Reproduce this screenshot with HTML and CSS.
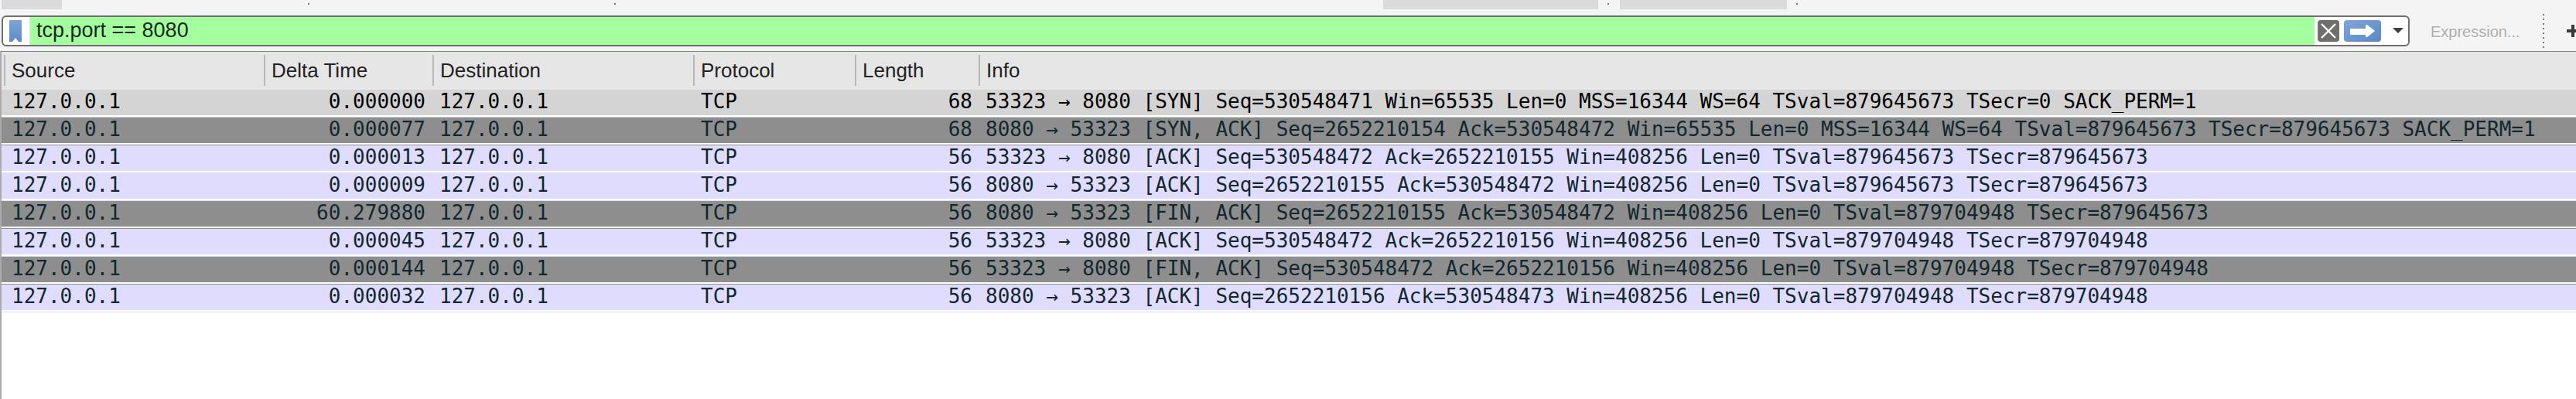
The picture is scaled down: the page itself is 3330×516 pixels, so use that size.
FILE: index.html
```html
<!DOCTYPE html>
<html lang="en">
<head>
<meta charset="utf-8">
<title>Wireshark filter tcp.port == 8080</title>
<link rel="stylesheet" href="styles.css">
</head>
<body>
<div class="toolbar">
  <div class="strip">
    <span class="block"></span><span></span><span class="dot"></span><span></span><span class="dot"></span><span></span><span class="block"></span><span></span><span class="dot"></span><span></span><span class="block"></span><span></span><span class="dot"></span>
  </div>
  <div class="filter-row">
    <div class="filter">
      <div class="bookmark">
        <svg width="16" height="28" viewBox="0 0 16 28"><defs><linearGradient id="bm" x1="0" y1="0" x2="0" y2="1"><stop offset="0" stop-color="#7ea5da"/><stop offset="1" stop-color="#5d8bc8"/></linearGradient></defs><path d="M1 0H15a1 1 0 0 1 1 1V28H12L8 23L4 28H0V1a1 1 0 0 1 1-1Z" fill="url(#bm)"/></svg>
      </div>
      <div class="filter-text">tcp.port == 8080</div>
      <div class="filter-actions">
        <svg class="btn-clear" width="28" height="28" viewBox="0 0 28 28"><rect width="28" height="28" rx="4" fill="#6f6f6b"/><path d="M5 5L23 23M23 5L5 23" stroke="#fff" stroke-width="2.4" fill="none"/></svg>
        <svg class="btn-apply" width="48" height="28" viewBox="0 0 48 28"><defs><linearGradient id="ap" x1="0" y1="0" x2="1" y2="1"><stop offset="0" stop-color="#7fa6da"/><stop offset="1" stop-color="#5a88c6"/></linearGradient></defs><rect width="48" height="28" rx="4" fill="url(#ap)"/><path d="M9 11H28V6H30L40 14L30 22H28V19H9a1 1 0 0 1-1-1V12a1 1 0 0 1 1-1Z" fill="#fff"/></svg>
        <svg class="btn-drop" width="14" height="7" viewBox="0 0 14 7"><path d="M0 0H14L7 7Z" fill="#3f3f3f"/></svg>
      </div>
    </div>
    <div class="expression">Expression...</div>
    <div class="dotted"></div>
    <svg class="plus" width="12" height="16" viewBox="0 0 12 16"><path d="M6 0H10V6H12V10H10V16H6V10H0V6H6Z" fill="#3a3a3a"/></svg>
  </div>
</div>
<div class="table">
  <div class="head">
    <div class="hcell">Source</div>
    <div class="hcell">Delta Time</div>
    <div class="hcell">Destination</div>
    <div class="hcell">Protocol</div>
    <div class="hcell">Length</div>
    <div class="hcell">Info</div>
  </div>
  <div class="row syn"><div class="cells"><span class="c-src">127.0.0.1</span><span class="c-r">0.000000</span><span>127.0.0.1</span><span>TCP</span><span class="c-r">68</span><span class="c-info">53323 → 8080 [SYN] Seq=530548471 Win=65535 Len=0 MSS=16344 WS=64 TSval=879645673 TSecr=0 SACK_PERM=1</span></div></div>
  <div class="row dark"><div class="cells"><span class="c-src">127.0.0.1</span><span class="c-r">0.000077</span><span>127.0.0.1</span><span>TCP</span><span class="c-r">68</span><span class="c-info">8080 → 53323 [SYN, ACK] Seq=2652210154 Ack=530548472 Win=65535 Len=0 MSS=16344 WS=64 TSval=879645673 TSecr=879645673 SACK_PERM=1</span></div></div>
  <div class="row tcp"><div class="cells"><span class="c-src">127.0.0.1</span><span class="c-r">0.000013</span><span>127.0.0.1</span><span>TCP</span><span class="c-r">56</span><span class="c-info">53323 → 8080 [ACK] Seq=530548472 Ack=2652210155 Win=408256 Len=0 TSval=879645673 TSecr=879645673</span></div></div>
  <div class="row tcp"><div class="cells"><span class="c-src">127.0.0.1</span><span class="c-r">0.000009</span><span>127.0.0.1</span><span>TCP</span><span class="c-r">56</span><span class="c-info">8080 → 53323 [ACK] Seq=2652210155 Ack=530548472 Win=408256 Len=0 TSval=879645673 TSecr=879645673</span></div></div>
  <div class="row dark"><div class="cells"><span class="c-src">127.0.0.1</span><span class="c-r">60.279880</span><span>127.0.0.1</span><span>TCP</span><span class="c-r">56</span><span class="c-info">8080 → 53323 [FIN, ACK] Seq=2652210155 Ack=530548472 Win=408256 Len=0 TSval=879704948 TSecr=879645673</span></div></div>
  <div class="row tcp"><div class="cells"><span class="c-src">127.0.0.1</span><span class="c-r">0.000045</span><span>127.0.0.1</span><span>TCP</span><span class="c-r">56</span><span class="c-info">53323 → 8080 [ACK] Seq=530548472 Ack=2652210156 Win=408256 Len=0 TSval=879704948 TSecr=879704948</span></div></div>
  <div class="row dark"><div class="cells"><span class="c-src">127.0.0.1</span><span class="c-r">0.000144</span><span>127.0.0.1</span><span>TCP</span><span class="c-r">56</span><span class="c-info">53323 → 8080 [FIN, ACK] Seq=530548472 Ack=2652210156 Win=408256 Len=0 TSval=879704948 TSecr=879704948</span></div></div>
  <div class="row tcp"><div class="cells"><span class="c-src">127.0.0.1</span><span class="c-r">0.000032</span><span>127.0.0.1</span><span>TCP</span><span class="c-r">56</span><span class="c-info">8080 → 53323 [ACK] Seq=2652210156 Ack=530548473 Win=408256 Len=0 TSval=879704948 TSecr=879704948</span></div></div>
</div>
</body>
</html>
```
FILE: styles.css
```css
* { box-sizing: border-box; }
html, body { margin: 0; padding: 0; }
body {
  width: 3330px;
  height: 516px;
  overflow: hidden;
  background: #fff;
  font-family: "Liberation Sans", Arial, sans-serif;
}
.toolbar {
  height: 66px;
  background: #f4f4f4;
}
.strip {
  display: grid;
  height: 12px;
  padding-left: 2px;
  grid-template-columns: 78px 318px 2px 394px 2px 992px 278px 12px 2px 14px 216px 12px 2px;
}
.block { background: #dadada; height: 12px; }
.dot { background: #777; width: 2px; height: 2px; margin-top: 4px; }
.filter-row {
  display: flex;
  align-items: flex-start;
  margin-top: 8px;
  padding-left: 2px;
  height: 46px;
}
.filter {
  display: flex;
  width: 3113px;
  height: 40px;
  border: 2px solid #6e6e6e;
  border-radius: 6px;
  background: #fff;
  overflow: hidden;
}
.bookmark {
  width: 35px;
  flex: none;
  padding: 4px 0 0 8px;
  border-right: 1px solid #e2e2e2;
}
.bookmark svg, .filter-actions svg { display: block; }
.filter-text {
  flex: 1;
  background: #a5ff9f;
  padding-left: 8px;
  font-size: 27px;
  line-height: 35px;
  color: #14281c;
}
.filter-actions {
  display: flex;
  flex: none;
  width: 121px;
  padding: 4px 0 0 4px;
  align-items: flex-start;
}
.btn-apply { margin-left: 6px; }
.btn-drop { margin: 10px 0 0 15px; }
.expression {
  margin: 9px 0 0 27px;
  width: 145px;
  flex: none;
  font-size: 20px;
  line-height: 24px;
  color: #adadad;
  text-shadow: 0 1px 0 #fff;
}
.dotted {
  width: 2px;
  height: 44px;
  margin-top: -2px;
  flex: none;
  background: repeating-linear-gradient(to bottom, #777 0 2px, transparent 2px 6px);
}
.plus { margin: 12px 0 0 29px; flex: none; }
.table {
  height: 450px;
  border-top: 1px solid #808080;
  border-left: 2px solid #ababab;
}
.head {
  display: grid;
  grid-template-columns: 336px 218px 337px 209px 160px 1fr;
  height: 49px;
  background: #e6e6e6;
  padding: 4px 0 5px 3px;
}
.hcell {
  border-left: 2px solid #b8b8b8;
  padding-left: 8px;
  font-size: 26px;
  line-height: 40px;
  color: #222;
}
.row { height: 36px; padding-bottom: 1px; }
.cells {
  display: grid;
  grid-template-columns: 340px 216px 338px 210px 159px 1fr;
  height: 35px;
  border-bottom: 2px solid #fff;
  font-family: "DejaVu Sans Mono", "Liberation Mono", monospace;
  font-size: 26px;
  line-height: 31px;
  white-space: pre;
}
.cells > span { padding-left: 10px; }
.cells > .c-src { padding-left: 13px; }
.cells > .c-r { text-align: right; padding: 0 8px 0 0; }
.cells > .c-info { padding-left: 9px; }
.syn { background: #d4d4d4; color: #000; }
.dark { background: #8e8e8e; color: #12272e; }
.tcp { background: #e0dcfd; color: #12272e; }
```
